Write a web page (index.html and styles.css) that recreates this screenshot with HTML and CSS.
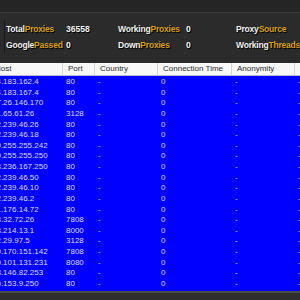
FILE: index.html
```html
<!DOCTYPE html>
<html lang="en">
<head>
    <meta charset="UTF-8">
    <meta name="viewport" content="width=device-width, initial-scale=1.0">
    <title>Proxy Checker</title>
    <link rel="stylesheet" href="styles.css">
</head>
<body>
    <div class="topbar"></div>

    <div class="stats">
        <div class="stat-label">Total<span class="gold">Proxies</span></div>
        <div class="stat-value">36558</div>
        <div class="stat-label">Working<span class="gold">Proxies</span></div>
        <div class="stat-value">0</div>
        <div class="stat-label">Proxy<span class="gold">Source</span></div>

        <div class="stat-label">Google<span class="gold">Passed</span></div>
        <div class="stat-value">0</div>
        <div class="stat-label">Down<span class="gold">Proxies</span></div>
        <div class="stat-value">0</div>
        <div class="stat-label">Working<span class="gold">Threads</span></div>
    </div>

    <div class="grid">
        <div class="grid-inner">
            <div class="grid-head">
                <div class="cell">Host</div>
                <div class="cell">Port</div>
                <div class="cell">Country</div>
                <div class="cell">Connection Time</div>
                <div class="cell">Anonymity</div>
                <div class="cell">Google</div>
            </div>
            <div class="grid-body" id="rows"></div>
        </div>
    </div>

    <div class="statusbar"></div>

    <script>
      const proxies = [
        ["94.183.162.4", 80], ["94.183.167.4", 80], ["37.26.146.170", 80],
        ["91.65.61.26", 3128], ["62.239.46.26", 80], ["62.239.46.18", 80],
        ["69.255.255.242", 80], ["69.255.255.250", 80], ["88.236.167.250", 80],
        ["62.239.46.50", 80], ["62.239.46.10", 80], ["62.239.46.2", 80],
        ["41.176.14.72", 80], ["78.32.72.26", 7808], ["23.214.13.1", 8000],
        ["12.29.97.5", 3128], ["79.170.151.142", 7808], ["50.101.131.231", 8080],
        ["93.146.82.253", 80], ["80.153.9.250", 80]
      ]

      const body = document.getElementById("rows")
      proxies.forEach(([host, port]) => {
        const row = document.createElement("div")
        row.className = "grid-row"
        const values = [host, port, "-", "0", "-", "-"]
        values.forEach(v => {
          const cell = document.createElement("div")
          cell.className = "cell"
          cell.textContent = v
          row.appendChild(cell)
        })
        body.appendChild(row)
      })
    </script>
</body>
</html>
```

FILE: styles.css
```css
* {
    box-sizing: border-box;
}
html, body {
    margin: 0;
    height: 100%;
}
body {
    width: 300px;
    height: 300px;
    overflow: hidden;
    display: flex;
    flex-direction: column;
    background: #2b2b2b;
    font-family: "Liberation Sans", Arial, sans-serif;
}
.topbar {
    height: 13px;
    flex: none;
    background: #252525;
    border-bottom: 1px solid #3a3a3a;
}
.stats {
    flex: none;
    margin: 7px 0 0 4px;
    padding: 1px 0 0 1px;
    border-left: 1px solid #1a1a1a;
    display: grid;
    grid-template-columns: 60px 52px 68px 50px 1fr;
    grid-auto-rows: 16px;
    font-size: 8.5px;
    font-weight: bold;
    line-height: 16px;
    color: #f2f2f2;
    text-shadow: 1px 1px 0 #000;
    white-space: nowrap;
}
.stat-label {
    letter-spacing: -0.2px;
}
.gold {
    color: #d9a112;
}
.grid {
    flex: 1;
    margin-top: 10px;
    overflow: hidden;
    display: flex;
    flex-direction: column;
}
.grid-inner {
    flex: 1;
    margin-left: -10px;
    width: 400px;
    display: flex;
    flex-direction: column;
}
.grid-head,
.grid-row {
    display: grid;
    grid-template-columns: 73px 32px 63px 74px 63px 95px;
}
.grid-head {
    height: 13px;
    flex: none;
    background: #f8f8f8;
    border-bottom: 1px solid #b8b8d8;
    font-size: 8px;
    line-height: 12px;
    color: #2a2a2a;
}
.grid-head .cell {
    padding-left: 5px;
    border-right: 1px solid #d4d4d4;
    white-space: nowrap;
    overflow: hidden;
}
.grid-body {
    flex: 1;
    background: #0000ff;
    padding-top: 1px;
}
.grid-row {
    height: 10.63px;
    font-size: 8px;
    line-height: 10.63px;
    color: #dcdcff;
}
.grid-row .cell {
    padding-left: 3px;
    white-space: nowrap;
}
.grid-row .cell:first-child {
    padding-left: 2px;
}
.statusbar {
    height: 9px;
    flex: none;
    background: #2e2e2e;
    border-top: 2px solid #4a4a4a;
}
```
